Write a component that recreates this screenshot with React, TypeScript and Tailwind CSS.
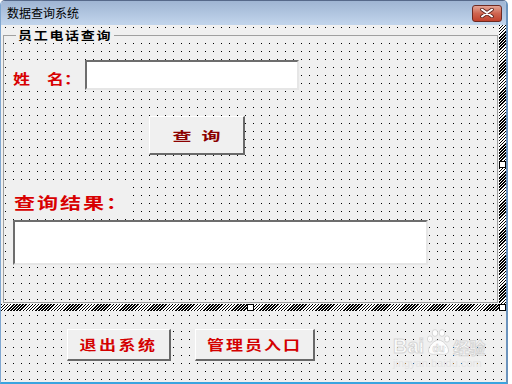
export default function App() {
  const dots =
    "bg-[#f0f0f0] bg-[image:conic-gradient(from_270deg_at_1px_1px,#000_25%,transparent_0)] bg-[length:8px_8px] bg-[position:4px_2px]";
  const hatch =
    "bg-[image:repeating-linear-gradient(135deg,#000_0_1.1px,#fff_1.1px_2.2px)]";
  const raised =
    "bg-[#f0f0f0] border-t border-l border-t-white border-l-white border-r-2 border-b-2 border-r-[#696969] border-b-[#696969]";
  const sunken =
    "bg-white border-t-2 border-l-2 border-t-[#6d6d6d] border-l-[#6d6d6d] border-r-2 border-b-2 border-r-[#e6e6e6] border-b-[#e6e6e6]";

  return (
    <div className="w-[512px] h-[384px] bg-white overflow-hidden font-['Noto_Sans_CJK_SC',sans-serif]">
      <div className="w-[508px] h-[384px] flex flex-col rounded-t-[5px] overflow-hidden border-t border-t-[#56698a] border-l border-l-[#7fa7d2] border-r-2 border-r-[#6b93bd] border-b-2 border-b-[#3aa4e0]">
        {/* title bar */}
        <div className="h-[24px] flex items-center bg-gradient-to-b from-[#9fb5d3] to-[#c2d5ec]">
          <span className="pl-[6px] text-[12px] text-black leading-none">数据查询系统</span>
          <div className="ml-auto mr-[4px] w-[30px] h-[17px] rounded-[3px] border border-[#6e2a22] bg-gradient-to-b from-[#e3a596] via-[#cf6550] to-[#c2412c] flex items-center justify-center">
            <svg width="14" height="10" viewBox="0 0 14 10">
              <path d="M2 1.5 L12 8.5 M12 1.5 L2 8.5" stroke="#5b221b" strokeWidth="3.6" strokeLinecap="round" />
              <path d="M2 1.5 L12 8.5 M12 1.5 L2 8.5" stroke="#fff" strokeWidth="2" strokeLinecap="round" />
            </svg>
          </div>
        </div>

        {/* client area */}
        <div className={`relative flex-1 flex flex-col ${dots}`}>
          {/* selected frame */}
          <div className="flex flex-col w-[505px]">
            <div className="flex h-[279px]">
              <div className="w-[498px] pt-[10px] pl-[2px]">
                <div className="relative w-[495px] h-[268px] border border-[#a0a0a0] flex flex-col">
                  <span className="absolute -top-[8px] left-[12px] px-[2px] bg-[#f0f0f0] text-[14px] leading-[14px] tracking-[1.7px] text-black font-bold scale-y-[0.85]">
                    员工电话查询
                  </span>

                  <div className="flex mt-[24px] pl-[4px]">
                    <div className="w-[74px] h-[29px] mt-[1px] bg-[#f0f0f0] flex items-center pl-[5px] pt-[5px]">
                      <span className="text-[17px] leading-none font-bold text-[#d80000] scale-y-[0.8]">姓　名：</span>
                    </div>
                    <div className={`ml-[3px] w-[214px] h-[30px] ${sunken}`} />
                  </div>

                  <div className={`mt-[26px] ml-[145px] w-[96px] h-[39px] flex items-center justify-center gap-[10px] text-[19px] leading-none font-bold text-[#8b0000] ${raised}`}>
                    <span className="scale-y-[0.65]">查</span>
                    <span className="scale-y-[0.65]">询</span>
                  </div>

                  <div className="mt-[32px] ml-[4px] w-[125px] h-[26px] bg-[#f0f0f0] flex items-center pl-[6px] pt-[4px]">
                    <span className="text-[21px] leading-none tracking-[2px] font-bold text-[#d80000] scale-y-[0.75] origin-left">查询结果：</span>
                  </div>

                  <div className={`mt-[7px] ml-[9px] w-[415px] h-[45px] ${sunken}`} />
                </div>
              </div>
              <div className={`relative w-[7px] h-full ${hatch}`}>
                <div className="absolute top-[136px] left-0 w-[7px] h-[7px] bg-white border border-black" />
              </div>
            </div>
            <div className={`relative h-[7px] w-[505px] ${hatch}`}>
              <div className="absolute top-0 left-[246px] w-[7px] h-[7px] bg-white border border-black" />
              <div className="absolute top-0 right-0 w-[7px] h-[7px] bg-white border border-black" />
            </div>
          </div>

          {/* bottom buttons */}
          <div className="flex pt-[18px] pl-[66px] gap-[24px]">
            <div className={`w-[104px] h-[32px] flex items-center justify-center text-[17px] leading-none tracking-[2.5px] font-bold text-[#d40000] ${raised}`}>
              <span className="scale-y-[0.78]">退出系统</span>
            </div>
            <div className={`w-[120px] h-[32px] flex items-center justify-center text-[17px] leading-none tracking-[2px] font-bold text-[#d40000] ${raised}`}>
              <span className="scale-y-[0.78]">管理员入口</span>
            </div>
          </div>

          {/* watermark */}
          <div className="absolute left-[392px] top-[303px] flex flex-col items-start opacity-90 pointer-events-none">
            <div className="flex items-end gap-[1px]">
              <span className="font-['Liberation_Sans',sans-serif] text-[20px] leading-none font-bold text-white [-webkit-text-stroke:1px_#d4d4d4]">Bai</span>
              <svg width="27" height="28" viewBox="0 0 27 28">
                <g fill="#fff" stroke="#d4d4d4" strokeWidth="1">
                  <ellipse cx="5" cy="11" rx="2.6" ry="3.2" />
                  <ellipse cx="10" cy="5" rx="2.8" ry="3.4" />
                  <ellipse cx="17" cy="5" rx="2.8" ry="3.4" />
                  <ellipse cx="22" cy="11" rx="2.6" ry="3.2" />
                  <path d="M13.5 12 C9 12 3 19 3.5 23 C4 27 9 26.5 13.5 26 C18 26.5 23 27 23.5 23 C24 19 18 12 13.5 12 Z" />
                </g>
                <text x="13.5" y="24" textAnchor="middle" fontSize="10" fontWeight="bold" fontFamily="Liberation Sans" fill="#fff" stroke="#cfcfcf" strokeWidth="0.6">du</text>
              </svg>
              <span className="text-[16px] leading-none font-bold text-white [-webkit-text-stroke:1px_#d4d4d4] mb-[1px]">经验</span>
            </div>
            <span className="mt-[2px] font-['Liberation_Sans',sans-serif] text-[11px] leading-none text-[#e4e4e4]">jingyan.baidu.com</span>
          </div>
        </div>
      </div>
    </div>
  );
}
